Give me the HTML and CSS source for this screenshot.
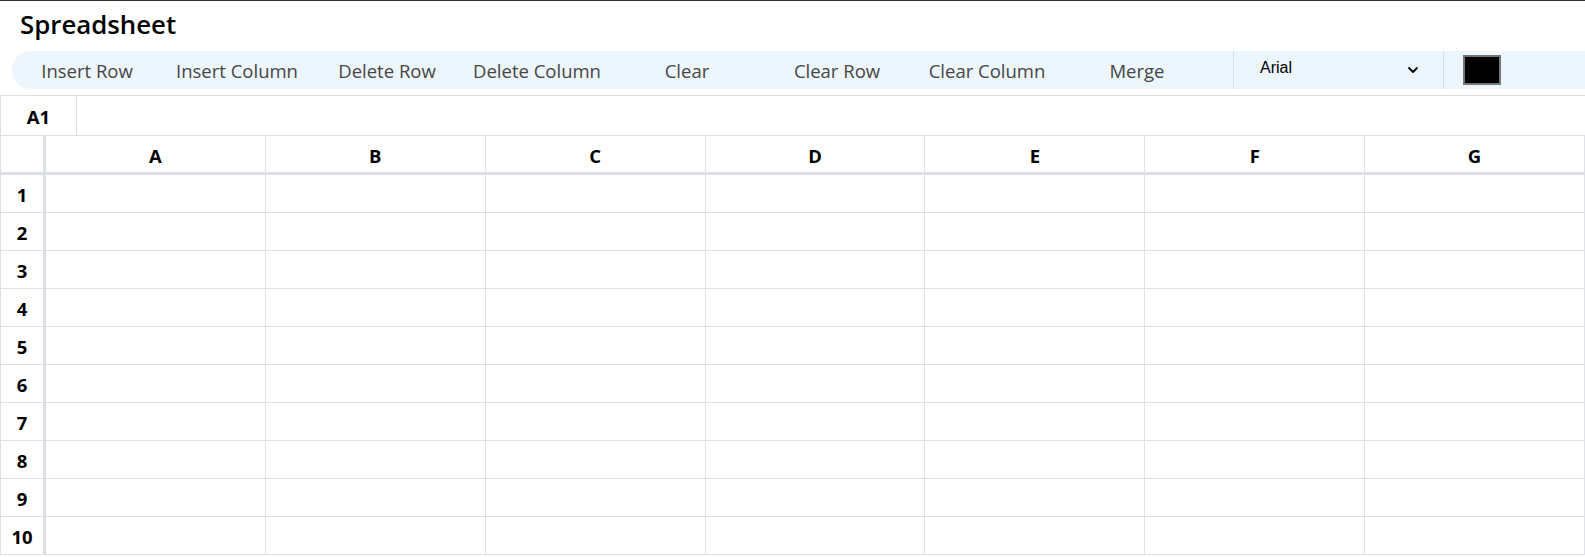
FILE: index.html
```html
<!DOCTYPE html>
<html lang="en">
<head>
<meta charset="utf-8">
<title>Spreadsheet</title>
<link rel="stylesheet" href="styles.css">
</head>
<body>
<div class="app">
  <h1 class="title">Spreadsheet</h1>
  <div class="toolbar">
    <button class="btn">Insert Row</button>
    <button class="btn">Insert Column</button>
    <button class="btn">Delete Row</button>
    <button class="btn">Delete Column</button>
    <button class="btn">Clear</button>
    <button class="btn">Clear Row</button>
    <button class="btn">Clear Column</button>
    <button class="btn">Merge</button>
    <div class="font-select">
      <span class="font-name">Arial</span>
      <svg class="chevron" width="10" height="6" viewBox="0 0 10 6"><polyline points="1,1 5,5 9,1" fill="none" stroke="#000" stroke-width="1.8" stroke-linecap="round" stroke-linejoin="round"/></svg>
    </div>
    <div class="swatch"></div>
  </div>
  <div class="formula-bar">
    <div class="cell-ref">A1</div>
    <div class="formula-input"></div>
  </div>
  <div class="grid">
    <div class="cell corner"></div>
    <div class="cell col-head">A</div><div class="cell col-head">B</div><div class="cell col-head">C</div><div class="cell col-head">D</div><div class="cell col-head">E</div><div class="cell col-head">F</div><div class="cell col-head">G</div>

    <div class="cell row-head">1</div><div class="cell"></div><div class="cell"></div><div class="cell"></div><div class="cell"></div><div class="cell"></div><div class="cell"></div><div class="cell"></div>
    <div class="cell row-head">2</div><div class="cell"></div><div class="cell"></div><div class="cell"></div><div class="cell"></div><div class="cell"></div><div class="cell"></div><div class="cell"></div>
    <div class="cell row-head">3</div><div class="cell"></div><div class="cell"></div><div class="cell"></div><div class="cell"></div><div class="cell"></div><div class="cell"></div><div class="cell"></div>
    <div class="cell row-head">4</div><div class="cell"></div><div class="cell"></div><div class="cell"></div><div class="cell"></div><div class="cell"></div><div class="cell"></div><div class="cell"></div>
    <div class="cell row-head">5</div><div class="cell"></div><div class="cell"></div><div class="cell"></div><div class="cell"></div><div class="cell"></div><div class="cell"></div><div class="cell"></div>
    <div class="cell row-head">6</div><div class="cell"></div><div class="cell"></div><div class="cell"></div><div class="cell"></div><div class="cell"></div><div class="cell"></div><div class="cell"></div>
    <div class="cell row-head">7</div><div class="cell"></div><div class="cell"></div><div class="cell"></div><div class="cell"></div><div class="cell"></div><div class="cell"></div><div class="cell"></div>
    <div class="cell row-head">8</div><div class="cell"></div><div class="cell"></div><div class="cell"></div><div class="cell"></div><div class="cell"></div><div class="cell"></div><div class="cell"></div>
    <div class="cell row-head">9</div><div class="cell"></div><div class="cell"></div><div class="cell"></div><div class="cell"></div><div class="cell"></div><div class="cell"></div><div class="cell"></div>
    <div class="cell row-head">10</div><div class="cell"></div><div class="cell"></div><div class="cell"></div><div class="cell"></div><div class="cell"></div><div class="cell"></div><div class="cell"></div>
  </div>
</div>
</body>
</html>
```
FILE: styles.css
```css
html, body {
  margin: 0;
  padding: 0;
  overflow: hidden;
  background: #fff;
}

body {
  font-family: "Open Sans", "Noto Sans", sans-serif;
  color: #000;
}

.app {
  border-top: 1px solid #333;
}

.title {
  margin: 0;
  padding: 6px 20px 0;
  font-size: 25.8px;
  font-weight: 600;
  line-height: 35px;
  color: #000;
}

.toolbar {
  display: flex;
  align-items: stretch;
  height: 38px;
  margin: 9px 0 0 12px;
  background: #edf5fd;
  border-radius: 19px 0 0 19px;
}

.btn {
  flex: none;
  width: 150px;
  padding: 0;
  border: none;
  background: none;
  font-family: "Open Sans", "Noto Sans", sans-serif;
  font-size: 18.5px;
  color: #464646;
  display: flex;
  align-items: center;
  justify-content: center;
}

.font-select {
  flex: none;
  box-sizing: border-box;
  width: 211px;
  margin-left: 21px;
  padding: 0 25px 4px 26px;
  display: flex;
  align-items: center;
  justify-content: space-between;
  border-left: 1px solid #d6dee6;
  border-right: 1px solid #d6dee6;
}

.font-name {
  font-family: "Liberation Sans", Arial, sans-serif;
  font-size: 16px;
  color: #000;
}

.chevron {
  display: block;
  margin-top: 4px;
}

.swatch {
  flex: none;
  align-self: center;
  box-sizing: border-box;
  width: 38px;
  height: 30px;
  margin-left: 19px;
  border: 2px solid #767676;
  background: #000;
}

.formula-bar {
  display: flex;
  box-sizing: border-box;
  height: 40px;
  margin-top: 6px;
  border-top: 1px solid #dcdee2;
  border-left: 1px solid #dcdee2;
}

.cell-ref {
  box-sizing: border-box;
  width: 76px;
  border-right: 1px solid #dcdee2;
  display: flex;
  align-items: center;
  justify-content: center;
  padding-top: 2px;
  font-size: 18.5px;
  font-weight: 700;
}

.formula-input {
  flex: 1;
}

.grid {
  display: grid;
  grid-template-columns: 45px repeat(7, 1fr);
  grid-auto-rows: 38px;
  grid-template-rows: 39px;
  border-top: 1px solid #dcdee2;
  border-left: 1px solid #dcdee2;
}

.cell {
  box-sizing: border-box;
  border-right: 1px solid #dfe1e6;
  border-bottom: 1px solid #dfe1e6;
  display: flex;
  align-items: center;
  justify-content: center;
  font-size: 18.5px;
  font-weight: 700;
}

.corner,
.col-head {
  border-bottom: 3px solid #dcdfe4;
  padding-top: 2px;
}

.corner,
.row-head {
  border-right: 3px solid #dcdfe4;
}

.row-head {
  padding-top: 2px;
}
```
